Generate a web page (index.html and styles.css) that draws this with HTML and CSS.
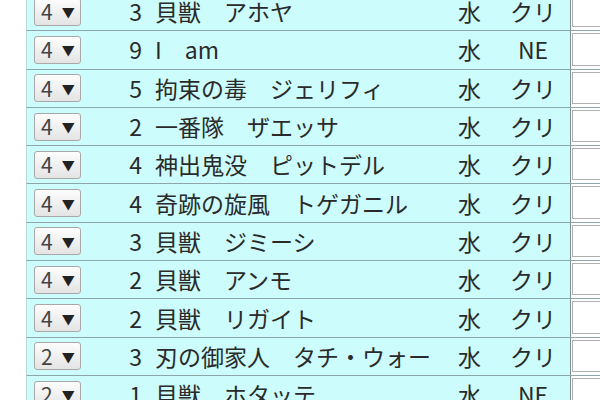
FILE: index.html
```html
<!DOCTYPE html>
<html lang="ja">
<head>
<meta charset="utf-8">
<link rel="stylesheet" href="styles.css">
</head>
<body>
<div class="table">
  <div class="row"><div class="c-sel"><span class="sel">4<span class="arr">▼</span></span></div><div class="c-num">3</div><div class="c-name">貝獣　アホヤ</div><div class="c-el">水</div><div class="c-type">クリ</div><div class="c-in"><span class="inp"></span></div></div>
  <div class="row"><div class="c-sel"><span class="sel">4<span class="arr">▼</span></span></div><div class="c-num">9</div><div class="c-name">I　am</div><div class="c-el">水</div><div class="c-type">NE</div><div class="c-in"><span class="inp"></span></div></div>
  <div class="row"><div class="c-sel"><span class="sel">4<span class="arr">▼</span></span></div><div class="c-num">5</div><div class="c-name">拘束の毒　ジェリフィ</div><div class="c-el">水</div><div class="c-type">クリ</div><div class="c-in"><span class="inp"></span></div></div>
  <div class="row"><div class="c-sel"><span class="sel">4<span class="arr">▼</span></span></div><div class="c-num">2</div><div class="c-name">一番隊　ザエッサ</div><div class="c-el">水</div><div class="c-type">クリ</div><div class="c-in"><span class="inp"></span></div></div>
  <div class="row"><div class="c-sel"><span class="sel">4<span class="arr">▼</span></span></div><div class="c-num">4</div><div class="c-name">神出鬼没　ピットデル</div><div class="c-el">水</div><div class="c-type">クリ</div><div class="c-in"><span class="inp"></span></div></div>
  <div class="row"><div class="c-sel"><span class="sel">4<span class="arr">▼</span></span></div><div class="c-num">4</div><div class="c-name">奇跡の旋風　トゲガニル</div><div class="c-el">水</div><div class="c-type">クリ</div><div class="c-in"><span class="inp"></span></div></div>
  <div class="row"><div class="c-sel"><span class="sel">4<span class="arr">▼</span></span></div><div class="c-num">3</div><div class="c-name">貝獣　ジミーシ</div><div class="c-el">水</div><div class="c-type">クリ</div><div class="c-in"><span class="inp"></span></div></div>
  <div class="row"><div class="c-sel"><span class="sel">4<span class="arr">▼</span></span></div><div class="c-num">2</div><div class="c-name">貝獣　アンモ</div><div class="c-el">水</div><div class="c-type">クリ</div><div class="c-in"><span class="inp"></span></div></div>
  <div class="row"><div class="c-sel"><span class="sel">4<span class="arr">▼</span></span></div><div class="c-num">2</div><div class="c-name">貝獣　リガイト</div><div class="c-el">水</div><div class="c-type">クリ</div><div class="c-in"><span class="inp"></span></div></div>
  <div class="row"><div class="c-sel"><span class="sel">2<span class="arr">▼</span></span></div><div class="c-num">3</div><div class="c-name">刃の御家人　タチ・ウォー</div><div class="c-el">水</div><div class="c-type">クリ</div><div class="c-in"><span class="inp"></span></div></div>
  <div class="row"><div class="c-sel"><span class="sel">2<span class="arr">▼</span></span></div><div class="c-num">1</div><div class="c-name">貝獣　ホタッテ</div><div class="c-el">水</div><div class="c-type">NE</div><div class="c-in"><span class="inp"></span></div></div>
</div>
</body>
</html>
```
FILE: styles.css
```css
html, body {
  margin: 0;
  padding: 0;
  background: #ffffff;
  overflow: hidden;
}
body {
  font-family: "Noto Sans CJK JP", "Noto Sans", sans-serif;
  color: #2a2a2a;
}
.table {
  margin-left: 26px;
  margin-top: -7px;
  width: 600px;
}
.row {
  display: grid;
  grid-template-columns: 74px 43px 307px 45px 74px 1fr;
  height: 38.3px;
  box-sizing: border-box;
  border-bottom: 1.5px solid #8ea6a9;
  border-left: 1px solid #b9d6d8;
  align-items: center;
  font-size: 23px;
  line-height: 1;
}
.row > div {
  height: 100%;
  display: flex;
  align-items: center;
  background: #ccfcfc;
  white-space: nowrap;
}
.c-sel {
  padding-left: 7px;
}
.sel {
  box-sizing: border-box;
  width: 47px;
  height: 28px;
  border: 1px solid #a8a8a8;
  border-radius: 3px;
  background: linear-gradient(#fdfdfd, #e4e4e4);
  display: flex;
  align-items: center;
  padding-left: 6px;
  font-size: 21px;
  color: #444;
}
.arr {
  font-size: 13px;
  margin-left: 9px;
  color: #222;
}
.c-num {
  justify-content: flex-end;
  padding-right: 2px;
}
.c-name {
  padding-left: 11px;
}
.c-el {
  padding-left: 7px;
}
.c-type {
  justify-content: center;
}
.row > .c-in {
  background: #ffffff;
  border-left: 1.5px solid #7d8f91;
  padding: 2px 0 3px 1px;
  box-sizing: border-box;
  align-items: stretch;
}
.inp {
  flex: 1;
  border: 1px solid #b0b0b0;
  border-right: none;
  background: #fff;
}
```
